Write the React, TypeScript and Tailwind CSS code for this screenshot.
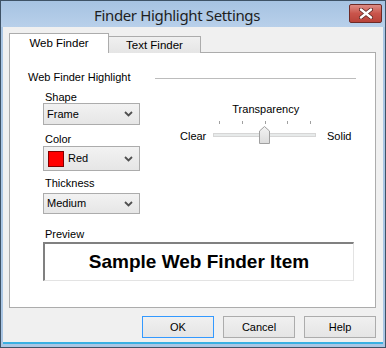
import React from "react";

const font = { fontFamily: '"Liberation Sans", Arial, sans-serif' };

function Chevron() {
  return (
    <svg width="9" height="6" viewBox="0 0 9 6" className="shrink-0">
      <path d="M1 1 L4.5 4.5 L8 1" fill="none" stroke="#505050" strokeWidth="1.8" />
    </svg>
  );
}

function Select({ children, h }: { children: React.ReactNode; h: string }) {
  return (
    <div
      className={`w-[97px] ${h} border border-[#acacac] bg-gradient-to-b from-[#f2f2f2] to-[#e6e6e6] flex items-center pl-[3px] pr-[6px] text-[11px] text-black`}
    >
      <div className="flex-1 flex items-center gap-[4px]">{children}</div>
      <Chevron />
    </div>
  );
}

function Slider() {
  return (
    <svg width="103" height="26" viewBox="0 0 103 26" className="shrink-0">
      <defs>
        <linearGradient id="th" x1="0" y1="0" x2="0" y2="1">
          <stop offset="0" stopColor="#f3f3f3" />
          <stop offset="1" stopColor="#dcdcdc" />
        </linearGradient>
      </defs>
      {[6, 29, 52, 74, 97].map((x) => (
        <line key={x} x1={x + 0.5} y1="2" x2={x + 0.5} y2="5" stroke="#a0a0a0" strokeWidth="1" />
      ))}
      <rect x="0.5" y="14.5" width="102" height="3" fill="#e7eaea" stroke="#d6d6d6" />
      <path d="M46.5 24.5 L46.5 12 L51.5 7.5 L56.5 12 L56.5 24.5 Z" fill="url(#th)" stroke="#a0a0a0" />
    </svg>
  );
}

function Btn({ children, focus }: { children: React.ReactNode; focus?: boolean }) {
  return (
    <div
      className={`w-[72px] h-[22px] flex items-center justify-center text-[11px] text-black bg-gradient-to-b from-[#f0f0f0] to-[#e5e5e5] border ${
        focus ? "border-[#3399ff]" : "border-[#acacac]"
      }`}
    >
      {children}
    </div>
  );
}

export default function App() {
  return (
    <div
      className="w-[386px] h-[348px] border border-[#3e5266] bg-[#aac6e4] flex flex-col"
      style={font}
    >
      {/* title bar */}
      <div className="h-[26px] flex items-start bg-gradient-to-b from-[#a6c3e2] to-[#b8d0ea]">
        <div
          className="text-[15px] text-[#1e1e1e] leading-none pt-[7px] pl-[93px]"
          style={{ fontFamily: '"Noto Sans", "Open Sans", sans-serif', letterSpacing: "-0.35px" }}
        >
          Finder Highlight Settings
        </div>
        <div className="ml-auto pr-[3px] pt-[3px]">
          <div className="w-[33px] h-[19px] rounded-[2px] border border-[#6e2a26] bg-gradient-to-b from-[#dd8c85] via-[#c9544b] to-[#b8433a] flex items-center justify-center">
            <svg width="14" height="11" viewBox="0 0 14 11">
              <path d="M2 1.5 L12 9.5 M12 1.5 L2 9.5" stroke="#5a2420" strokeWidth="4" strokeLinecap="round" />
              <path d="M2 1.5 L12 9.5 M12 1.5 L2 9.5" stroke="#ffffff" strokeWidth="2.4" strokeLinecap="round" />
            </svg>
          </div>
        </div>
      </div>

      {/* client area */}
      <div className="flex-1 mx-[2px] mb-[3px] bg-[#f0f0f0] border-b-[2px] border-[#39b0e2] pl-[6px] pr-[7px] pt-[6px] flex flex-col">
        {/* tabs */}
        <div className="flex items-end h-[20px] relative z-10">
          <div className="w-[100px] h-[20px] bg-white border border-b-0 border-[#acacac] flex items-center justify-center text-[11.5px] text-black pt-[1px]">
            Web Finder
          </div>
          <div className="w-[92px] h-[17px] border border-l-0 border-b-0 border-[#acacac] bg-gradient-to-b from-[#f0f0f0] to-[#e5e5e5] flex items-center justify-center text-[11.5px] text-black pt-[1px]">
            Text Finder
          </div>
        </div>
        {/* panel */}
        <div className="h-[256px] -mt-px border border-[#acacac] bg-white flex flex-col text-[11px] text-black">
          <div className="flex items-center mt-[17px] pl-[18px] pr-[19px] h-[14px]">
            <span>Web Finder Highlight</span>
            <div className="flex-1 h-px bg-[#bcbcbc] ml-[24px] mt-[2px]" />
          </div>
          <div className="flex pl-[33px] mt-[5px]">
            <div className="flex flex-col">
              <div className="h-[14px] pl-[2px]">Shape</div>
              <div>
                <Select h="h-[22px]">Frame</Select>
              </div>
              <div className="h-[14px] pl-[2px] mt-[6px]">Color</div>
              <div className="mt-[1px]">
                <Select h="h-[25px]">
                  <span className="w-[16px] h-[16px] bg-[#ff0000] border border-[#800000] ml-px" />
                  <span>Red</span>
                </Select>
              </div>
              <div className="h-[14px] pl-[2px] mt-[4px]">Thickness</div>
              <div className="mt-[4px]">
                <Select h="h-[21px]">Medium</Select>
              </div>
            </div>
            <div className="flex flex-col items-center ml-[40px] mt-[12px]">
              <div className="h-[14px]">Transparency</div>
              <div className="flex items-start mt-[4px]">
                <div className="w-[33px] mt-[9px]">Clear</div>
                <Slider />
                <div className="ml-[11px] mt-[9px]">Solid</div>
              </div>
            </div>
          </div>
          <div className="pl-[35px] mt-[12px] h-[14px]">Preview</div>
          <div className="ml-[33px] mt-[2px] w-[311px] h-[39px] border border-t-[#808080] border-l-[#808080] border-b-[#e3e3e3] border-r-[#e3e3e3] border-t-2 border-l-2 bg-white flex items-center justify-center">
            <span className="text-[19px] font-bold text-black">Sample Web Finder Item</span>
          </div>
        </div>
        {/* buttons */}
        <div className="flex justify-end gap-[9px] mt-[8px]">
          <Btn focus>OK</Btn>
          <Btn>Cancel</Btn>
          <Btn>Help</Btn>
        </div>
      </div>
    </div>
  );
}
